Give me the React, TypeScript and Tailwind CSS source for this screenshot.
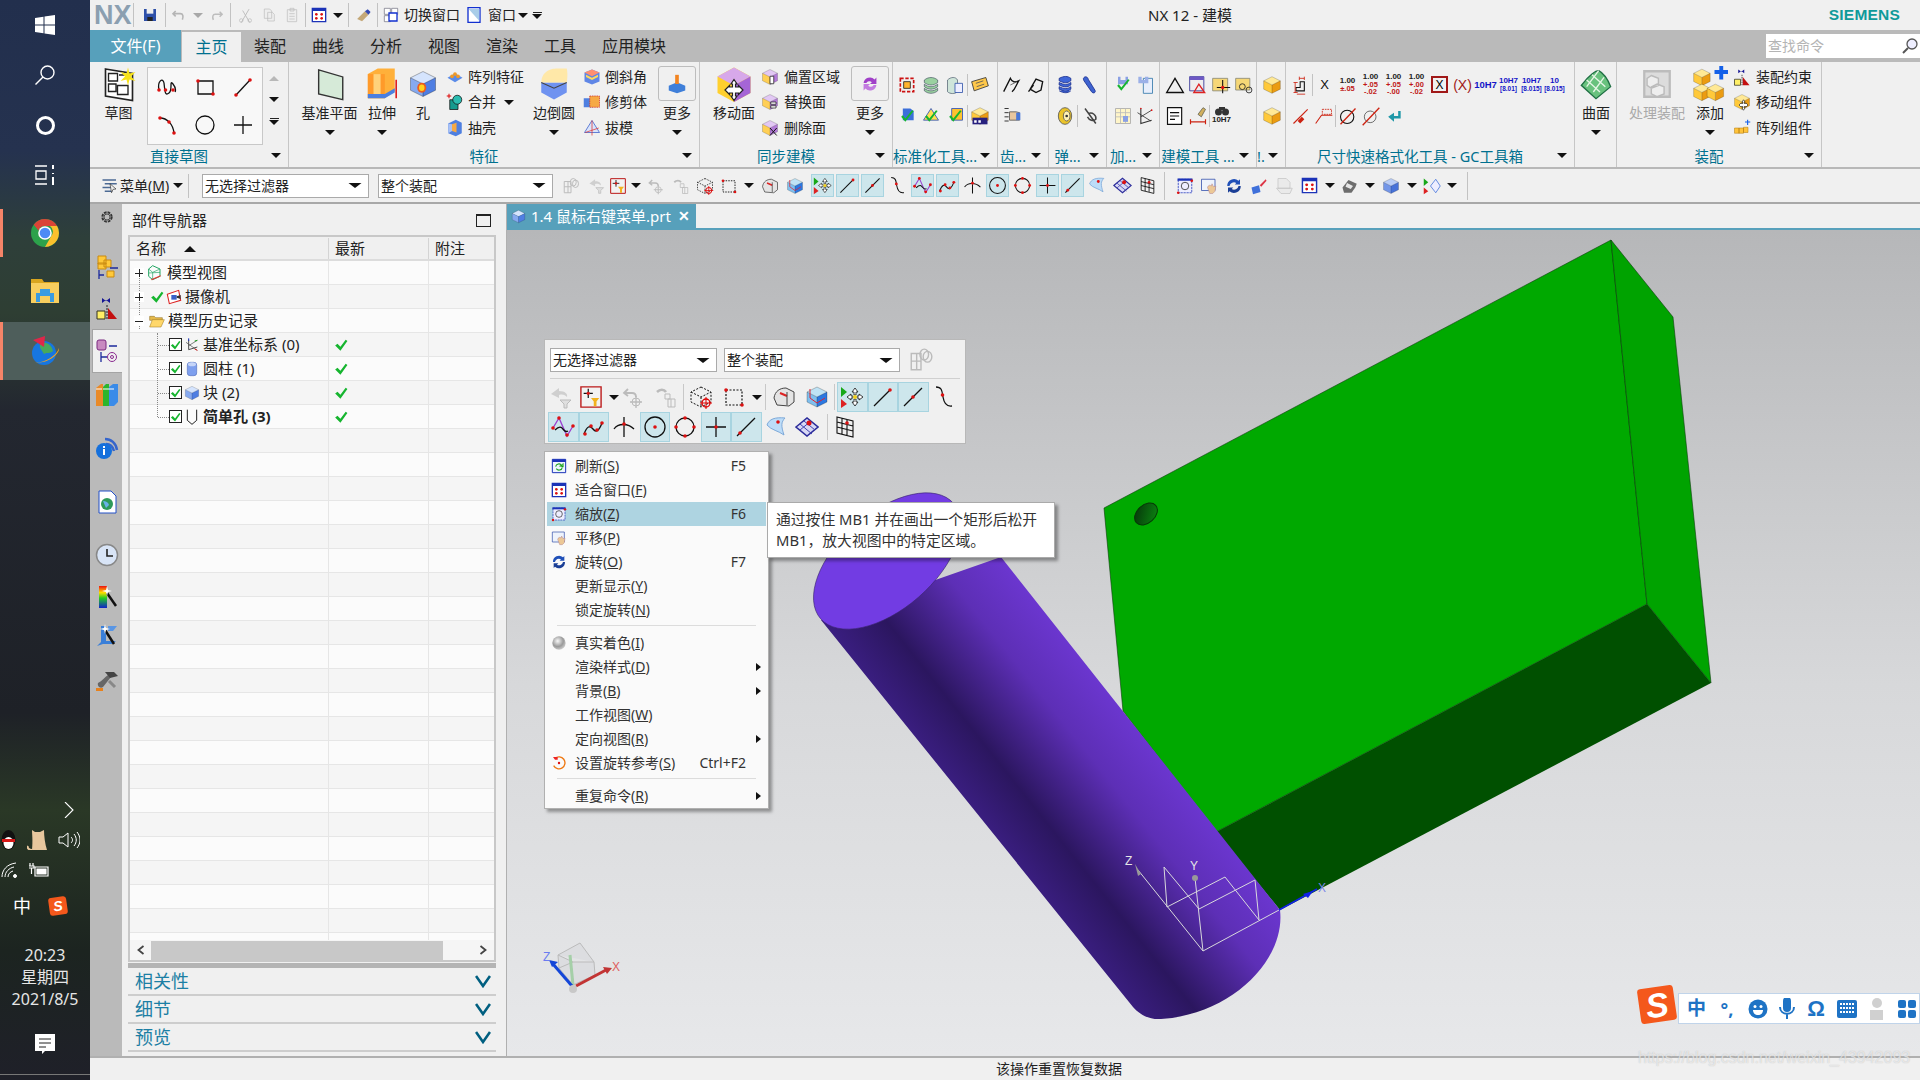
import type { ReactNode } from 'react';

const Svg = ({ s = 24, children }: { s?: number; children: ReactNode }) => (
  <svg width={s} height={s} viewBox="0 0 24 24" fill="none" className="shrink-0">
    {children}
  </svg>
);

const Dot = ({ x, y, r = 1.8 }: { x: number; y: number; r?: number }) => <circle cx={x} cy={y} r={r} fill="#dd1111" />;

const Cube = ({ t, l, r }: { t: string; l: string; r: string }) => (
  <>
    <path d="M12 2 22 7 12 12 2 7Z" fill={t} />
    <path d="M2 7 12 12V22L2 17Z" fill={l} />
    <path d="M22 7 12 12V22L22 17Z" fill={r} />
    <path d="M12 2 22 7V17L12 22 2 17V7ZM2 7l10 5 10-5M12 12v10" stroke="#00000055" strokeWidth=".7" />
  </>
);
const blue = { t: '#d5e4fd', l: '#86a9ef', r: '#4f7ee2' };
const yellow = { t: '#ffe995', l: '#ffc93a', r: '#eb9c12' };
const purple = { t: '#e2c8f4', l: '#ffcf55', r: '#b27ad8' };
const Ln = ({ d, c = '#111', w = 1.3 }: { d: string; c?: string; w?: number }) => <path d={d} stroke={c} strokeWidth={w} />;
const Check = ({ c = '#16b52f' }: { c?: string }) => <path d="M5 13l5 6L20 6l-2-1-8 10-3-4z" fill={c} />;

const icons: Record<string, ReactNode> = {
  save: (<><path d="M3 3h18v18H3z" fill="#2d4fa8" /><path d="M7 3h10v7H7z" fill="#eee" /><path d="M8 15h8v6H8z" fill="#222" /></>),
  undo: <Ln d="M7 6 3 10l4 4M3 10h11c4 0 5 4 3 9" c="#b5b5b5" w={2.4} />,
  redo: <Ln d="M17 6l4 4-4 4M21 10H10c-4 0-5 4-3 9" c="#bdbdbd" w={2.4} />,
  cut: (<><Ln d="M6 22 17 3M18 22 8 5" c="#bbb" /><circle cx="6" cy="19" r="2.5" stroke="#bbb" /><circle cx="18" cy="19" r="2.5" stroke="#bbb" /></>),
  copy: <path d="M5 3h8l3 3v11H5zM10 8h7l3 3v10H10z" fill="#eee" stroke="#bbb" />,
  paste: <path d="M5 4h14v18H5zM9 2h6v4H9zM8 10h8M8 14h8M8 18h8" fill="#eee" stroke="#bbb" />,
  fit: (<><path d="M2 2h20v20H2z" fill="#fff" stroke="#1c33b8" strokeWidth="2" /><path d="M2 2h20v4H2z" fill="#1c33b8" /><Dot x={8} y={11} r={2} /><Dot x={16} y={11} r={2} /><Dot x={8} y={17} r={2} /><Dot x={16} y={17} r={2} /></>),
  brush: (<><path d="M3 17 14 6l5 5-9 9z" fill="#c4a878" /><path d="M14 6l4-3 4 4-3 4z" fill="#3448b0" /></>),
  switchw: (<><path d="M2 2h9v9H2zM2 13h9v9H2zM13 2h9v9h-9z" fill="#fff" stroke="#667" /><path d="M9 9h12v12H9z" fill="#fff" stroke="#1230d0" strokeWidth="2" /></>),
  win: (<><path d="M3 1h18v22H3z" fill="#fff" stroke="#1230d0" strokeWidth="2" /><path d="M4 3h16v18z" fill="#a9cde8" /></>),
  sketch: (<><path d="M3 2 21 5v18L3 20z" fill="#fff" stroke="#222" strokeWidth="1.1" /><path d="M5 5h6v5H5zM5 12h5v5H5zM11 13h7v6h-7zM12 6h5" stroke="#222" strokeWidth=".9" /><path d="M18 1l1 4 4-1-3 3 3 3-4-1-1 4-1-4-4 1 3-3-3-3 4 1z" fill="#f7e21a" /></>),
  spline: (<><Ln d="M4 15C2 6 8 2 9 8c1 9 1 13 5 10 4-3 0-14 4-9s2 8 2 8" /><Dot x={4} y={15} /><Dot x={10.5} y={15} /><Dot x={18} y={15} /></>),
  rect: (<><path d="M5 6h15v13H5z" stroke="#111" strokeWidth="1.3" /><Dot x={5} y={6} /><Dot x={20} y={19} /></>),
  line: (<><Ln d="M5 20 19 5" /><Dot x={5} y={20} /><Dot x={19} y={5} /></>),
  arc: (<><Ln d="M5 5c7 0 13 6 14 15" /><Dot x={5} y={5} /><Dot x={14} y={9} /><Dot x={19} y={20} /></>),
  circle: <circle cx="12" cy="12" r="9" stroke="#111" strokeWidth="1.3" />,
  cross: <Ln d="M12 3v18M3 12h18" />,
  plane: <path d="M4 2 21 7v16L4 19z" fill="#d6ead8" stroke="#333" />,
  extrude: (<><path d="M2 5 9 1h12v16l-7 5H2z" fill="#ffb03a" /><path d="M2 5h12v17H2z" fill="#ff9a2a" /><path d="M6 5h5v17H6z" fill="#ffd27a" /><path d="M2 19h12l7-4v3l-7 4H2z" fill="#4a7fe0" /><Ln d="M22 22V9" c="#d00" w={1} /></>),
  hole: (<><Cube {...blue} /><ellipse cx="11" cy="15" rx="3.6" ry="4" fill="#ef5a1a" /><ellipse cx="11" cy="15" rx="2.2" ry="2.6" fill="#ffd21e" /></>),
  pattern: (<><path d="M2 13 12 7l10 6-10 6z" fill="#5a8be8" /><circle cx="8" cy="11" r="2.5" fill="#f29a24" /><circle cx="12" cy="8" r="2.5" fill="#f29a24" /><circle cx="16" cy="11" r="2.5" fill="#f29a24" /></>),
  unite: (<><path d="M5 9h11v13H5z" fill="#159a8e" stroke="#111" /><circle cx="15" cy="9" r="6" fill="#2bbcb0" stroke="#111" /><Ln d="M1 4h6M4 1v6" c="#d00" /></>),
  shell: (<><path d="M3 6 13 1l8 4v14l-8 4-10-4z" fill="#4e7fe0" /><path d="M8 7l6-2v13l-6-2z" fill="#f6a944" /><path d="M3 6l5 1v9l-5 3z" fill="#a9c1f5" /></>),
  blend: (<><path d="M3 11h18v7l-9 5-9-5z" fill="#6f92f0" /><path d="M3 11C3 3 10 1 14 1h7c1 4 0 10 0 10H3z" fill="#ffe8a8" /><path d="M3 11l9 4 9-4" stroke="#444" strokeWidth=".8" /></>),
  chamfer: (<><path d="M2 6 12 2l10 4v12l-10 4-10-4z" fill="#5f86e6" /><path d="M2 6l10-4 10 4-10 5z" fill="#ff8f70" /><path d="M4 9l8 4 8-4v3l-8 4-8-4z" fill="#ffd95a" /></>),
  trim: (<><path d="M1 7h12v12H1z" fill="#4e7fe0" /><path d="M9 4h13v15H9z" fill="#f6a944" stroke="#c33" strokeDasharray="2 1" /></>),
  draft: (<><path d="M12 2 22 18H2z" fill="#d9e4fb" stroke="#3559c8" /><path d="M12 2v20M3 18l18-6" stroke="#d33" /></>),
  boxarrow: (<><path d="M3 14l9-4 9 4v5l-9 3-9-3z" fill="#3f7fd9" /><path d="M10 2h4v10h-4z" fill="#f28420" /></>),
  moveface: (<><path d="M12 1 23 7v11l-11 6L1 18V7z" fill="#ffd02e" /><path d="M12 1 23 7 12 13 1 7z" fill="#d7a8ea" /><path d="M23 7v11l-11 6V13z" fill="#a565d6" /><path d="M12 9l2 3h-1v2h2v-1l3 3-3 3v-1h-2v2h1l-2 3-2-3h1v-2H9v1l-3-3 3-3v1h2v-2h-1z" fill="#fff" stroke="#222" strokeWidth=".8" /></>),
  offset: (<><Cube {...purple} /><path d="M12 11h5v10h-5z" fill="#fff" stroke="#222" /></>),
  replace: (<><Cube {...purple} /><path d="M13 12h7v3h-7zM13 17h7v3h-7z" fill="#fff" stroke="#222" /></>),
  deleteface: (<><Cube {...purple} /><Ln d="M12 12l9 10M21 12l-9 10" /></>),
  refresh: (<><path d="M5 11a7 7 0 0 1 12-4l2-2v7h-7l2-2a4 4 0 0 0-6 1z" fill="#a040c8" /><path d="M19 13a7 7 0 0 1-12 4l-2 2v-7h7l-2 2a4 4 0 0 0 6-1z" fill="#c27be0" /></>),
  frame: (<><path d="M4 4h16v16H4z" stroke="#c11" strokeWidth="2" strokeDasharray="4 2" /><path d="M8 8h8v8H8z" fill="#ffb52e" stroke="#222" /></>),
  stack: <path d="M4 6c5-4 11-4 16 0v3c-5 4-11 4-16 0zM4 11c5 4 11 4 16 0v3c-5 4-11 4-16 0zM4 16c5 4 11 4 16 0v3c-5 4-11 4-16 0z" fill="#9ad1a0" stroke="#345" strokeWidth=".7" />,
  stack2: (<><path d="M3 6c4-4 10-4 12 0v14c-3 3-9 3-12 0z" fill="#cfe5da" stroke="#456" strokeWidth=".8" /><path d="M12 10h9v11h-9z" fill="#eef" stroke="#35a" /></>),
  tag: (<><path d="M2 8 19 3l3 10-17 6z" fill="#ffc84a" stroke="#333" /><Ln d="M7 10l9-3M8 14l9-3" c="#555" w={1} /></>),
  checkcube: (<><path d="M7 3h9l4 3v11H7z" fill="#3b6fd9" /><Check /></>),
  checkhat: (<><path d="M12 3 21 17H3z" fill="#ffe050" stroke="#2b4fbc" /><Check /></>),
  checkyellow: (<><path d="M8 3h13v14H8z" fill="#ffc22e" stroke="#2b4fbc" /><Check /></>),
  yellowedit: (<><Cube {...yellow} /><path d="M3 14h18v8H3z" fill="#27207e" /><path d="M5 17h3v3H5zM10 17h3v3h-3z" fill="#fff" /></>),
  gearS: (<><Ln d="M2 20 10 4c2 5 6 5 10 3-3 5-4 10-8 13" w={1.6} /><path d="M10 12l8-4" stroke="#555" /></>),
  bevel: <path d="M5 17 12 5l8 3-2 10-6 3zM3 20l6-8" fill="#eee" stroke="#111" strokeWidth="1.6" />,
  hand: (<><Ln d="M3 3h5M3 8h5M3 13h5M3 18h5" w={1} /><path d="M9 7h8l4 1v9H9z" fill="#e9c79e" stroke="#555" /><path d="M17 8h5v9h-5z" fill="#4a78d8" /></>),
  coil: <path d="M5 4c6-3 10-3 14 0v3c-4 3-8 3-14 0zM5 9c6 3 10 3 14 0v3c-4 3-8 3-14 0zM5 14c6 3 10 3 14 0v3c-4 3-8 3-14 0zM5 19c6 3 10 3 14 0" fill="#3f66d8" stroke="#1b2f8f" />,
  spring: <path d="M6 3c2-2 5 0 5 2l8 13c2 3-2 5-4 2L6 7C5 5 5 4 6 3z" fill="#3e63d0" stroke="#1b2f8f" />,
  disk: (<><ellipse cx="12" cy="12" rx="8" ry="10" fill="#ebc42a" stroke="#555" /><ellipse cx="14" cy="12" rx="4" ry="6" fill="#fff2b4" stroke="#555" /><circle cx="14" cy="12" r="1.6" fill="#333" /></>),
  pipe: <Ln d="M6 3 19 21M10 9c5-2 10 2 9 7-3 3-8 1-10-3" c="#444" w={1.8} />,
  vCheck: (<><path d="M6 2h3v4h6V2h3v9H6z" fill="#8aa0e4" /><Check /></>),
  doclist: (<><path d="M10 4h11v18H10z" fill="#e7eefc" stroke="#37a" /><path d="M4 2h4v4h4V2h4v8H4z" fill="#9bb0e8" /></>),
  tableV: (<><path d="M3 3h18v18H3z" fill="#fff5c8" stroke="#aaa" /><path d="M3 8h18M3 13h18M9 3v18M15 3v18" stroke="#bbb" /><path d="M12 12h6v7h-6z" fill="#8aa0e4" /></>),
  axis: (<><path d="M7 3v18l13-4" stroke="#333" strokeWidth="1.3" /><path d="M3 8l16 10M7 13l13-8" stroke="#333" /><Dot x={7} y={3} r={1} /><Dot x={20} y={5} r={1} /></>),
  triangle: <path d="M12 4 22 21H2z" stroke="#111" strokeWidth="1.6" />,
  table: (<><path d="M2 2h17v17H2z" fill="#eee" stroke="#2c2c92" /><path d="M2 2h17v4H2z" fill="#6e58c4" /><path d="M13 11l7 10H7z" stroke="#d22" strokeWidth="1.6" /></>),
  folderCross: (<><path d="M2 4h18v15H2z" fill="#f6d776" stroke="#887" /><Ln d="M14 6v16M7 15h16" c="#111" /><Dot x={14} y={15} r={2} /></>),
  folderRing: (<><path d="M2 4h17v14H2z" fill="#f6d776" stroke="#887" /><circle cx="10" cy="14" r="3.5" stroke="#222" /><circle cx="18" cy="18" r="3.5" stroke="#222" /></>),
  note: <path d="M3 2h17v20H3zM6 8h11M6 12h11M6 16h6" fill="#fff" stroke="#111" strokeWidth="1.4" />,
  brushdim: (<><path d="M12 10 18 2l3 2-5 9z" fill="#d2b05e" stroke="#665" /><path d="M3 16v6M21 16v6M3 19h18" stroke="#c21" strokeWidth="1.4" /></>),
  yellowCubes: <Cube {...yellow} />,
  stepdim: (<><path d="M6 15h5V8h5v11H6z" stroke="#111" strokeWidth="1.3" /><path d="M10 2v4M16 2v4M10 4h6M3 9h5M3 21h5M5 9v12M7 23h10" stroke="#c21" /></>),
  slashdim: (<><Ln d="M3 21 20 4" c="#c21" w={1.4} /><path d="M8 18l5-5 3 3-5 5z" fill="#c21" /></>),
  leader: (<><Ln d="M2 21 9 11h13" c="#c21" /><path d="M10 4h11v6H10z" stroke="#c21" strokeDasharray="2 1" /></>),
  diaK: (<><circle cx="11" cy="13" r="8" stroke="#111" strokeWidth="1.3" /><Ln d="M3 22 21 3" c="#c21" w={1.6} /></>),
  diaR: (<><circle cx="11" cy="13" r="7" stroke="#555" /><Ln d="M2 23 22 2" c="#c21" w={1.6} /></>),
  tealArrow: <path d="M20 6v9h-8v4l-7-6 7-5v4h5V6z" fill="#1f98a8" />,
  surf: (<><path d="M1 13C7 5 12 2 14 2c4 2 7 7 9 12l-11 9z" fill="#69c27e" stroke="#1f6f44" /><path d="M5 9l10 9M9 5l10 9M14 2l-9 12M18 7l-8 11" stroke="#e6f5e6" /></>),
  assem: (<><path d="M3 3h18v18H3z" fill="#dcdcdc" stroke="#bcbcbc" strokeWidth="1.6" /><path d="M8 6l5 2v5l-5 2-3-2V8zM12 12l5 2v5l-5 2-4-2v-5z" fill="#eee" stroke="#bbb" /></>),
  addcube: (<><g transform="translate(0 1) scale(.55)"><Cube {...yellow} /></g><g transform="translate(0 11) scale(.55)"><Cube {...yellow} /></g><g transform="translate(9 11) scale(.55)"><Cube {...yellow} /></g><path d="M15 4h9M19.5 0v9" stroke="#1460e8" strokeWidth="2.6" /></>),
  constraint: (<><path d="M7 2v5l4-3 4 3V2l-4 3z" fill="#151593" /><path d="M2 15h8v8H2z" fill="#ffef66" stroke="#332" /><path d="M13 12l9 11h-9z" fill="#c30f0f" /><path d="M12 9v14" stroke="#222" strokeDasharray="2 1" /></>),
  movecomp: (<><Cube {...yellow} /><path d="M14 9l2 3h-1v2h2v-1l3 3-3 3v-1h-2v2h1l-2 3-2-3h1v-2h-2v1l-3-3 3-3v1h2v-2h-1z" fill="#fff" stroke="#111" strokeWidth=".8" /></>),
  arraycomp: (<><path d="M2 12h6v7H2zM8 12h6v7H8zM14 11h6v7h-6z" fill="#ffc33a" stroke="#b27a10" strokeWidth=".7" /><path d="M16 4h7M19.5 1v7" stroke="#1460e8" strokeWidth="1.5" /></>),
  menu: (<><path d="M2 3h18v2H2zM5 8h16v2H5zM2 13h12v2H2zM5 18h10v2H5z" fill="#4c6a94" /><path d="M12 9l8 7-4 .5L14 21z" fill="#eee" stroke="#222" strokeWidth=".8" /></>),
  link: (<><path d="M3 6h9v15H3zM8 6v15M3 13h9" stroke="#bbb" strokeWidth="1.3" /><ellipse cx="15" cy="7" rx="4" ry="5" stroke="#bbb" strokeWidth="1.3" /><ellipse cx="18" cy="9" rx="4" ry="5" stroke="#bbb" strokeWidth="1.3" /></>),
  grayfilter: (<><path d="M2 9 10 3v3c6 0 9 3 8 6-2-2-4-3-8-2v3z" fill="#cfcfcf" /><path d="M11 15h11l-4 4v4h-3v-4z" fill="#dfdfdf" stroke="#bbb" /></>),
  redfilter: (<><path d="M1 1h22v22H1z" fill="#f2f2f2" stroke="#bb1818" strokeWidth="1.5" /><Ln d="M9 3v10M4 8h10" /><Dot x={9} y={8} /><path d="M12 13h9l-3 4v5h-3v-5z" fill="#f2b21f" /></>),
  undoTarget: (<><Ln d="M7 4 3 8l4 3M3 8h8c3 0 4 2 4 4" c="#bbb" w={1.8} /><circle cx="15" cy="17" r="4" stroke="#bbb" /><Ln d="M15 11v12M9 17h12" c="#bbb" /></>),
  chainfilter: (<><path d="M3 7c3-3 7-3 9 0" stroke="#bbb" strokeWidth="2.5" /><path d="M11 9h5v5h-5zM14 14h7v8h-7zM17 14v8" stroke="#bbb" /></>),
  cubeTarget: (<><path d="M12 2 22 7v10l-10 5-10-5V7zM2 7l10 5 10-5M12 12v10" stroke="#111" strokeDasharray="2 1.5" /><circle cx="17" cy="18" r="4" stroke="#d00" strokeWidth="1.3" /><path d="M17 12v12M11 18h12" stroke="#d00" /></>),
  rectDash: (<><path d="M4 5h16v15H4z" stroke="#111" strokeDasharray="2 1.5" strokeWidth="1.2" /><Dot x={4} y={5} /><Dot x={20} y={20} /></>),
  viewcyl: (<><path d="M2 13C3 6 8 3 14 3l8 4v10l-5 4-12-1z" fill="#e4e4e4" stroke="#444" /><path d="M8 8l7 3" stroke="#d22" strokeWidth="2" /><path d="M15 7v13" stroke="#444" /></>),
  viewcube: (<><Cube t="#bfe3f5" l="#7fbfee" r="#2c78e0" /><path d="M5 4v9l7 5 8-5" stroke="#d23" /></>),
  snapall: (<><path d="M1 2l6 5-6 5z" fill="#18a818" /><path d="M1 14l6 5-6 4z" fill="#d22" /><path d="M15 3l3 4h-2v3h-2V7h-2zM15 21l3-4h-2v-3h-2v3h-2zM7 12l4-3v2h2v2h-2v2zM23 12l-4-3v2h-2v2h2v2z" fill="#fff" stroke="#111" strokeWidth=".8" /><circle cx="15" cy="12" r="2" fill="#f3d11f" /></>),
  lineEnd: (<><Ln d="M3 21 19 5" /><Dot x={19} y={5} /></>),
  lineMid: (<><Ln d="M3 21 21 3" /><Dot x={12} y={12} /></>),
  curvePt: (<><Ln d="M4 2c6 0 6 4 7 10s3 10 9 9" /><Dot x={10.5} y={10} /></>),
  polyPt: (<><Ln d="M2 13 8 3l8 18 6-10" c="#9a3fd0" /><Dot x={8} y={3} /><Dot x={2} y={13} /><Dot x={16} y={20} /><Dot x={22} y={11} /><Ln d="M4 15c3-3 5-4 7-2s3 5 6 3" /></>),
  splinePt: (<><Ln d="M2 19c3-8 6-9 9-5s6 2 9-6" /><Dot x={3} y={19} /><Dot x={9} y={11} /><Dot x={15} y={15} /><Dot x={20} y={8} /></>),
  arcPt: (<><Ln d="M2 14C6 8 16 8 22 14M12 2v20" /><Dot x={12} y={9} /></>),
  circleCtr: (<><circle cx="12" cy="12" r="10" stroke="#111" strokeWidth="1.3" /><Dot x={12} y={12} /></>),
  circle4: (<><circle cx="12" cy="12" r="9" stroke="#111" strokeWidth="1.3" /><Dot x={12} y={3} /><Dot x={12} y={21} /><Dot x={3} y={12} /><Dot x={21} y={12} /></>),
  crossPt: (<><Ln d="M12 2v20M2 12h20" /><Dot x={12} y={12} /></>),
  linePt: (<><Ln d="M3 21 21 3" /><Dot x={6} y={18} /></>),
  surfPt: (<><path d="M2 10C4 4 10 2 20 3c-4 4-4 8-1 17C14 16 6 15 2 10z" fill="#bcdcf8" stroke="#7ea9d8" /><Dot x={13} y={7} /></>),
  meshPt: (<><path d="M1 12 12 3l11 9-11 9z" fill="#d7d8f4" stroke="#2b2b9a" strokeWidth="1.5" /><path d="M5 9l12 10M9 6l11 9M5 15 16 6" stroke="#4343b0" /><Dot x={14} y={8} r={2.5} /></>),
  gridPt: (<><path d="M4 2 20 6v16L4 18zM4 7l16 4M4 12l16 4M9 3v16M14 4v16" stroke="#111" strokeWidth="1.1" /><Dot x={14} y={8} /></>),
  zoomW: (<><path d="M3 3h18v18H3z" fill="#eef" stroke="#1c33b8" strokeDasharray="3 1" /><path d="M2 2h20v3H2z" fill="#1c33b8" /><circle cx="12" cy="12" r="5" stroke="#222" /><Dot x={3} y={21} /><Dot x={21} y={5} /></>),
  pan: (<><path d="M2 3h18v15H2z" fill="#eef3fb" stroke="#2a48a8" /><path d="M10 14c1-3 3-4 5-2l1-3 2 4 3-1-1 7-3 3h-4z" fill="#ecc896" stroke="#a78" strokeWidth=".6" /></>),
  rotate: (<><path d="M3 12A9 9 0 0 1 18 5l2-2v7h-7l2-2A6 6 0 0 0 6 12z" fill="#2050b8" /><path d="M21 12a9 9 0 0 1-15 7l-2 2v-7h7l-2 2a6 6 0 0 0 9-4z" fill="#1b3f96" /></>),
  pen: (<><path d="M2 14l10-3 2 9-10 3z" fill="#3f70da" /><path d="M13 11l8-8 1 2-7 8z" fill="#dd3344" /></>),
  grayDoc: <path d="M4 2h11l5 5v8H4zM2 15l6 7h12l3-7z" fill="#eaeaea" stroke="#c4c4c4" />,
  scanner: (<><path d="M2 14l8-10 11 5-2 5-5 7H4z" fill="#6d6d6d" /><path d="M8 8l8 4-3 4-7-3z" fill="#e6e6e6" /></>),
  bluecube: <Cube t="#b9cdf7" l="#7396e8" r="#4772d8" />,
  snapfilter: (<><path d="M1 2l6 5-6 5z" fill="#18a818" /><path d="M1 14l6 5-6 4z" fill="#d22" /><path d="M17 3l6 9-6 9-7-9z" fill="#eef" stroke="#3a6cd8" /></>),
  refreshWin: (<><path d="M2 2h20v20H2z" fill="#eef5ff" stroke="#1c33b8" strokeWidth="1.5" /><path d="M2 2h20v4H2z" fill="#1c33b8" /><path d="M7 13a5 5 0 0 1 9-2l-2 1 4 1v-4l-1 1M17 14a5 5 0 0 1-9 2" stroke="#18a018" strokeWidth="1.6" /></>),
  sphere: (<><defs><radialGradient id="sph" cx=".4" cy=".35" r=".7"><stop offset="0" stopColor="#f8f8f8" /><stop offset=".6" stopColor="#9a9a9a" /><stop offset="1" stopColor="#d0d0d0" /></radialGradient></defs><circle cx="12" cy="12" r="10" fill="url(#sph)" /></>),
  rotref: (<><path d="M6 5a9 9 0 1 1-2 11" stroke="#ee7711" strokeWidth="2" /><path d="M3 3h7v4H6z" fill="#ee2222" /><Dot x={12} y={12} /></>),
  tree: (<><path d="M7 1 18 6v11l-11 5L1 17V6z" stroke="#23a563" strokeWidth="1.5" /><path d="M1 6l6 5 11-5M7 11v11M1 12l17-1" stroke="#23a563" /><path d="M5 22l14-6" stroke="#e33" strokeWidth="1.6" /></>),
  camera: (<><path d="M2 8 19 2l3 15-17 5z" fill="#fff" stroke="#dd2222" strokeWidth="1.6" /><path d="M8 9h8v7H8z" fill="#3a5fc8" /><path d="M16 11l6-2v6l-6-2z" fill="#333" /></>),
  folder: (<><path d="M1 5h7l2 2h10v4H1z" fill="#e5b94a" stroke="#8a6a20" strokeWidth=".8" /><path d="M1 21 5 10h18l-5 11z" fill="#ffd76a" stroke="#a07a20" strokeWidth=".8" /></>),
  datum: (<><path d="M7 4v15l13-4" stroke="#333" strokeWidth="1.3" /><path d="M3 8l17 12M7 13l13-8" stroke="#444" /><path d="M20 5l-4 1" stroke="#18a018" strokeWidth="1.5" /><path d="M20 20l-4-2" stroke="#d22" strokeWidth="1.5" /><path d="M7 2v4" stroke="#1c33b8" strokeWidth="1.5" /></>),
  cylinder: (<><rect x="5" y="2" width="14" height="20" rx="4" fill="#7e9fee" stroke="#5672c0" /><ellipse cx="12" cy="5" rx="6" ry="3" fill="#c6d5f8" /></>),
  block: <Cube {...blue} />,
  simplehole: <path d="M5 1v16l7 6 7-6V1" stroke="#111" strokeWidth="1.4" />,
};

const Ic = ({ n, s = 20 }: { n: string; s?: number }) => <Svg s={s}>{icons[n]}</Svg>;

const Caret = ({ c = 'border-t-[#111]' }: { c?: string }) => (
  <span className={`inline-block h-0 w-0 border-x-[5px] border-t-[5px] border-x-transparent ${c}`} />
);

const Sep = ({ h = 'h-[24px]', m = '' }: { h?: string; m?: string }) => <div className={`w-px bg-[#c2c2c2] ${h} ${m}`} />;

const Slot = ({ w, n, s = 20 }: { w: string; n: string; s?: number }) => (
  <div className={`flex h-[24px] shrink-0 items-center justify-center ${w}`}>
    <Ic n={n} s={s} />
  </div>
);

const SogouS = ({ s }: { s: string }) => (
  <span className={`flex rotate-[-8deg] items-center justify-center rounded-[3px] bg-[#f4581c] font-['Liberation_Sans',sans-serif] font-bold italic leading-none text-white ${s}`}>S</span>
);

const Taskbar = () => (
  <aside className="flex h-full w-[90px] shrink-0 flex-col items-center bg-[linear-gradient(180deg,#222f4d_0%,#25324f_14%,#2e3f3a_22%,#2e3e33_29%,#232730_38%,#1e2127_66%,#2a3826_75%,#1c2420_88%,#1f2029_100%)] text-[#e6e6e6]">
    <div className="flex h-[50px] w-full items-center justify-center">
      <svg width="20" height="20" viewBox="0 0 20 20"><path d="M0 3 8.5 1.800V9.500H0zM9.500 1.600 20 0V9.500H9.500zM0 10.500H8.500V18.200L0 17zM9.500 10.500H20V20L9.500 18.400z" fill="#fff" /></svg>
    </div>
    <div className="flex h-[50px] w-full items-center justify-center">
      <svg width="22" height="22" viewBox="0 0 22 22" fill="none" stroke="#fff" strokeWidth="1.4"><circle cx="13.5" cy="8.5" r="6.5" /><path d="M9 13 1.500 20.500" /></svg>
    </div>
    <div className="flex h-[50px] w-full items-center justify-center">
      <div className="h-[19px] w-[19px] rounded-full border-[3px] border-white" />
    </div>
    <div className="flex h-[50px] w-full items-center justify-center">
      <svg width="20" height="20" viewBox="0 0 20 20" fill="none" stroke="#fff" strokeWidth="1.3"><path d="M0 1h12M0 19h12M1 6h10v8H1z" /><path d="M18 0v4M18 8v1M18 12v8" strokeWidth="2" /></svg>
    </div>
    <div className="relative flex h-[66px] w-full items-center justify-center before:absolute before:left-0 before:top-[9px] before:h-[48px] before:w-[3px] before:bg-[#f58468]">
      <svg width="28" height="28" viewBox="0 0 28 28">
        <circle cx="14" cy="14" r="14" fill="#2ca14b" />
        <path d="M14 0a14 14 0 0 1 12.100 7H14a7 7 0 0 0-6.500 4.400L2.700 5.800A14 14 0 0 1 14 0z" fill="#db4437" />
        <path d="M26.100 7A14 14 0 0 1 14 28l6-10.500a7 7 0 0 0-1-10.500z" fill="#fbc02d" />
        <circle cx="14" cy="14" r="6.8" fill="#fff" /><circle cx="14" cy="14" r="5.3" fill="#4c8bf5" />
      </svg>
    </div>
    <div className="flex h-[56px] w-full items-center justify-center pb-[6px]">
      <svg width="28" height="24" viewBox="0 0 28 24"><path d="M0 0h11l2 3h15v21H0z" fill="#d9a51f" /><path d="M0 4h28v20H0z" fill="#f8ce5e" /><path d="M5 23v-9h4V10h10v4h4v9h-4v-6H9v6z" fill="#3a9be0" /></svg>
    </div>
    <div className="relative flex h-[58px] w-full items-center justify-center bg-[#4e5e5b] before:absolute before:left-0 before:top-0 before:h-full before:w-[3px] before:bg-[#f58468]">
      <svg width="30" height="30" viewBox="0 0 30 30">
        <circle cx="14" cy="17" r="12" fill="#1776e0" /><path d="M10 7c5-2 12 1 13 8-3 3-6 1-9 3-2-4-5-5-4-11z" fill="#48a85c" />
        <path d="M2 27c8 1 24-5 27-15 1 5-9 16-27 15z" fill="#f2a51e" /><path d="M3 4 15 0l-1 11z" fill="#e0264a" />
      </svg>
    </div>
    <div className="flex-1" />
    <div className="flex h-[30px] w-full items-center justify-end pr-[16px]">
      <svg width="10" height="16" viewBox="0 0 10 16" fill="none" stroke="#fff" strokeWidth="1.1"><path d="M1 0l8 8-8 8" /></svg>
    </div>
    <div className="flex h-[30px] w-full items-center gap-[10px]">
      <svg width="17" height="20" viewBox="0 0 17 20"><ellipse cx="8.5" cy="10" rx="7" ry="10" fill="#111" /><ellipse cx="8.5" cy="13" rx="5" ry="6" fill="#fff" /><path d="M2 9h13v3H2z" fill="#d81818" /></svg>
      <svg width="21" height="20" viewBox="0 0 21 20"><path d="M5 20C6 10 5 4 5 0l3 2h5l4-2c0 6 1 14 3 20z" fill="#e8c79d" /><path d="M5 20c-3 0-5-2-4-4" stroke="#e8c79d" strokeWidth="2" fill="none" /></svg>
      <svg width="22" height="18" viewBox="0 0 22 18" fill="none" stroke="#fff" strokeWidth="1"><path d="M1 6h4l5-4v14l-5-4H1zM13 6c2 2 2 4 0 6M16 3c3 4 3 8 0 12M19 1c4 5 4 11 0 16" /></svg>
    </div>
    <div className="flex h-[30px] w-full items-center gap-[12px] pl-[1px]">
      <svg width="16" height="16" viewBox="0 0 16 16" fill="none" stroke="#fff" strokeWidth="1"><path d="M1 15C1 8 6 2 15 1M4 15c0-5 4-9 9-10M7 15c0-3 2-5 5-6" /><circle cx="14" cy="14" r="1.5" fill="#fff" /></svg>
      <svg width="21" height="14" viewBox="0 0 21 14" fill="none" stroke="#fff" strokeWidth="1.2"><path d="M6 4h13v9H6z" /><path d="M8 6h9v5H8z" fill="#fff" /><path d="M1 0v3M4 0v3M0 3h5v2H0M2.500 5v6" /></svg>
    </div>
    <div className="flex h-[42px] w-full items-center gap-[18px] pl-[13px]">
      <span className="text-[18px] leading-none text-white">中</span>
      <SogouS s="h-[18px] w-[18px] text-[14px]" />
    </div>
    <div className="mt-[17px] flex flex-col items-center text-[16px] leading-[22px]">
      <span>20:23</span>
      <span>星期四</span>
      <span>2021/8/5</span>
    </div>
    <div className="mt-[22px] flex h-[24px] items-center justify-center">
      <svg width="22" height="22" viewBox="0 0 22 22"><path d="M1 1h20v17H11l-3 3v-3H1z" fill="#fff" /><path d="M5 6h12M5 10h12M5 14h7" stroke="#222" strokeWidth="1" /></svg>
    </div>
    <div className="mt-[18px] h-px w-full bg-[#777]" />
    <div className="h-[5px]" />
  </aside>
);

const TitleBar = () => (
  <header className="flex h-[30px] shrink-0 items-center bg-[#f0f0f0]">
    <div className="flex w-[1058px] items-center">
      <span className="ml-[4px] w-[37px] font-['Liberation_Sans',sans-serif] text-[27px] font-bold leading-none text-[#8b9fb0]">NX</span>
      <Sep m="ml-[2px]" />
      <Slot w="w-[31px]" n="save" s={16} />
      <Sep />
      <Slot w="w-[26px]" n="undo" s={16} />
      <div className="flex w-[12px] justify-center"><Caret c="border-t-[#a8a8a8]" /></div>
      <Slot w="w-[24px]" n="redo" s={15} />
      <Sep m="ml-[2px]" />
      <Slot w="w-[28px]" n="cut" s={17} />
      <Slot w="w-[20px]" n="copy" s={16} />
      <Slot w="w-[26px]" n="paste" s={16} />
      <Sep />
      <Slot w="w-[26px]" n="fit" s={16} />
      <div className="flex w-[12px] justify-center"><Caret /></div>
      <Sep m="ml-[4px]" />
      <Slot w="w-[28px]" n="brush" s={17} />
      <Sep />
      <Slot w="w-[26px]" n="switchw" s={16} />
      <span className="text-[14px] leading-none text-[#222]">切换窗口</span>
      <Slot w="w-[28px]" n="win" s={16} />
      <span className="text-[14px] leading-none text-[#222]">窗口</span>
      <div className="flex w-[14px] justify-center"><Caret /></div>
      <div className="flex w-[14px] flex-col items-center gap-[1px]"><span className="h-px w-[9px] bg-[#222]" /><Caret /></div>
    </div>
    <span className="text-[15px] leading-none text-[#222]">NX 12 - 建模</span>
    <span className="ml-auto mr-[20px] font-['Liberation_Sans',sans-serif] text-[15.5px] font-bold leading-none tracking-[0.2px] text-[#0f9a9a]">SIEMENS</span>
  </header>
);

const tabs = ['装配', '曲线', '分析', '视图', '渲染', '工具'];

const TabBar = () => (
  <nav className="flex h-[32px] shrink-0 items-end bg-[#bababa] text-[16px] leading-none text-[#222]">
    <div className="flex h-full w-[91px] items-center justify-center bg-[#57a0bb] text-white">文件(F)</div>
    <div className="ml-px flex h-[30px] w-[59px] items-center justify-center bg-[#f0f0f0] text-[#00708f]">主页</div>
    {tabs.map((t) => (
      <div key={t} className="flex h-full w-[58px] items-center justify-center">{t}</div>
    ))}
    <div className="flex h-full items-center pl-[13px]">应用模块</div>
    <div className="ml-auto flex h-[24px] w-[154px] items-center self-center bg-white pl-[2px] text-[14px] text-[#b4b4b4]">
      查找命令
      <svg className="ml-auto mr-[2px]" width="16" height="16" viewBox="0 0 16 16" fill="none" stroke="#555" strokeWidth="1.3"><circle cx="10" cy="6" r="5" fill="#eef" /><path d="M6 10 1 15" strokeWidth="2" /></svg>
    </div>
  </nav>
);

const Group = ({ w, label, children, arrow = true }: { w: string; label: string; children: ReactNode; arrow?: boolean }) => (
  <section className={`flex h-full shrink-0 flex-col border-r border-[#c6c6c6] ${w}`}>
    <div className="flex h-[83px] items-start">{children}</div>
    <div className="relative flex h-[22px] items-center justify-center overflow-hidden whitespace-nowrap pr-[20px] text-[14.5px] leading-none text-[#00708f]">
      {label}
      {arrow && <span className="absolute right-[7px] top-[8px] flex"><Caret /></span>}
    </div>
  </section>
);

const Big = ({ w, n, s = 34, label, gray = false, caret = true, ml = '' }: { w: string; n: string; s?: number; label: string; gray?: boolean; caret?: boolean; ml?: string }) => (
  <div className={`flex shrink-0 flex-col items-center pt-[5px] ${w} ${ml}`}>
    <div className="flex h-[34px] items-center justify-center"><Ic n={n} s={s} /></div>
    <span className={`mt-[2px] h-[20px] whitespace-nowrap text-[14px] leading-[20px] ${gray ? 'text-[#aaa]' : 'text-[#222]'}`}>{label}</span>
    {caret && <span className="mt-[7px] flex"><Caret /></span>}
  </div>
);

const More = ({ n, w, ml }: { n: string; w: string; ml: string }) => (
  <div className={`flex shrink-0 flex-col items-center pt-[4px] ${w} ${ml}`}>
    <div className="flex h-[35px] w-full items-center justify-center rounded-[3px] border border-[#bdbdbd]"><Ic n={n} s={22} /></div>
    <span className="mt-[2px] h-[20px] text-[14px] leading-[20px] text-[#222]">更多</span>
    <span className="mt-[7px] flex"><Caret /></span>
  </div>
);

const Small = ({ items, slot, w, ml = '' }: { items: [string, string, boolean?][]; slot: string; w: string; ml?: string }) => (
  <div className={`flex shrink-0 flex-col pt-[2px] ${w} ${ml}`}>
    {items.map(([n, t, caret]) => (
      <div key={t} className="flex h-[25.5px] items-center text-[14px] leading-none text-[#222]">
        <div className={`flex shrink-0 justify-center pr-[3px] ${slot}`}><Ic n={n} s={18} /></div>
        <span className="whitespace-nowrap">{t}</span>
        {caret && <span className="ml-[8px] flex"><Caret /></span>}
      </div>
    ))}
  </div>
);

const IconRows = ({ rows, slot, pl, s = 20 }: { rows: string[][]; slot: string; pl: string; s?: number }) => (
  <div className={`flex flex-col pt-[7px] ${pl}`}>
    {rows.map((r, i) => (
      <div key={i} className="flex h-[31px] items-center">
        {r.map((n, j) =>
          n === '|' ? <Sep key={j} h="h-[22px]" /> : (
            <div key={j} className={`flex shrink-0 items-center justify-center ${slot}`}>
              {n in icons ? <Ic n={n} s={s} /> : <DimGlyph t={n} />}
            </div>
          ),
        )}
      </div>
    ))}
  </div>
);

// dimension-format buttons: the picture shows little numbers, so they stay text
const DimGlyph = ({ t }: { t: string }) => {
  const [a, b, c] = t.split('/');
  const tol = a.includes('H') || a === '10';
  if (t === 'X') return <span className="font-['Liberation_Sans',sans-serif] text-[13px] leading-none text-[#111]">X</span>;
  if (t === 'bX') return <span className="flex h-[17px] w-[17px] items-center justify-center border-2 border-[#a01818] font-['Liberation_Sans',sans-serif] text-[12px] leading-none">X</span>;
  if (t === 'pX') return <span className="font-['Liberation_Sans',sans-serif] text-[14px] leading-none text-[#a01818]">(X)</span>;
  if (t === 'bin') {
    return (
      <span className="flex flex-col items-center font-['Liberation_Sans',sans-serif] text-[8px] font-bold leading-[8px] text-[#222]">
        <svg width="14" height="9" viewBox="0 0 14 9" fill="#333"><circle cx="3.5" cy="5" r="3.5" /><circle cx="10.5" cy="5" r="3.5" /><path d="M4 0h6v3H4z" /></svg>
        10H7
      </span>
    );
  }
  return (
    <span className={`flex flex-col items-center whitespace-nowrap font-['Liberation_Sans',sans-serif] font-bold ${tol ? 'text-[#1414c8]' : 'text-[#222]'} ${b ? 'text-[8px] leading-[7.5px]' : 'text-[9.5px] leading-none'}`}>
      <span>{a}</span>
      {b && <span className={tol ? 'text-[6.5px]' : 'text-[7.5px] text-[#c01818]'}>{b}</span>}
      {c && <span className="text-[7.5px] text-[#c01818]">{c}</span>}
    </span>
  );
};

const Ribbon = () => (
  <div className="flex h-[107px] shrink-0 border-b-2 border-[#b8b8b8] bg-[#f0f0f0]">
    <Group w="w-[199px]" label="直接草图">
      <Big w="w-[57px]" n="sketch" s={36} label="草图" caret={false} />
      <div className="mt-[5px] grid h-[78px] w-[116px] grid-cols-3 place-items-center border border-[#c8c8c8] bg-[#f8f8f8]">
        {['spline', 'rect', 'line', 'arc', 'circle', 'cross'].map((n) => <Ic key={n} n={n} s={24} />)}
      </div>
      <div className="flex h-[83px] w-[22px] flex-col items-center gap-[16px] pt-[14px]">
        <Caret c="border-t-[#b8b8b8] rotate-180" />
        <Caret />
        <span className="flex flex-col items-center gap-[1px]"><span className="h-px w-[9px] bg-[#222]" /><Caret /></span>
      </div>
    </Group>
    <Group w="w-[411px]" label="特征">
      <Big w="w-[81px]" n="plane" label="基准平面" />
      <Big w="w-[24px]" n="extrude" label="拉伸" />
      <Big w="w-[42px]" ml="ml-[8px]" n="hole" s={30} label="孔" caret={false} />
      <Small w="w-[80px]" slot="w-[24px]" items={[['pattern', '阵列特征'], ['unite', '合并', true], ['shell', '抽壳']]} />
      <Big w="w-[42px]" ml="ml-[9px]" n="blend" label="边倒圆" />
      <Small w="w-[66px]" ml="ml-[6px]" slot="w-[24px]" items={[['chamfer', '倒斜角'], ['trim', '修剪体'], ['draft', '拔模']]} />
      <More n="boxarrow" w="w-[38px]" ml="ml-[11px]" />
    </Group>
    <Group w="w-[193px]" label="同步建模">
      <Big w="w-[50px]" ml="ml-[9px]" n="moveface" s={36} label="移动面" caret={false} />
      <Small w="w-[81px]" slot="w-[25px]" items={[['offset', '偏置区域'], ['replace', '替换面'], ['deleteface', '删除面']]} />
      <More n="refresh" w="w-[38px]" ml="ml-[11px]" />
    </Group>
    <Group w="w-[105px]" label="标准化工具...">
      <IconRows pl="pl-[2px]" slot="w-[24px]" rows={[['frame', 'stack', 'stack2', '|', 'tag'], ['checkcube', 'checkhat', 'checkyellow', '|', 'yellowedit']]} />
    </Group>
    <Group w="w-[51px]" label="齿...">
      <IconRows pl="pl-[2px]" slot="w-[24px]" rows={[['gearS', 'bevel'], ['hand']]} />
    </Group>
    <Group w="w-[58px]" label="弹...">
      <IconRows pl="pl-[4px]" slot="w-[24px]" rows={[['coil', 'spring'], ['disk', '|', 'pipe']]} />
    </Group>
    <Group w="w-[53px]" label="加...">
      <IconRows pl="pl-[5px]" slot="w-[22px]" rows={[['vCheck', 'doclist'], ['tableV', 'axis']]} />
    </Group>
    <Group w="w-[97px]" label="建模工具 ...">
      <IconRows pl="pl-[3px]" slot="w-[23px]" rows={[['triangle', 'table', 'folderCross', 'folderRing'], ['note', 'brushdim', '|', 'bin']]} />
    </Group>
    <Group w="w-[29px]" label="!.">
      <IconRows pl="pl-[4px]" slot="w-[22px]" rows={[['yellowCubes'], ['yellowCubes']]} />
    </Group>
    <Group w="w-[289px]" label="尺寸快速格式化工具 - GC工具箱">
      <IconRows pl="pl-[3px]" slot="w-[23px]" rows={[['stepdim', '|', 'X', '1.00/±.05', '1.00/+.05/-.02', '1.00/+.05/-.00', '1.00/+.00/-.02', 'bX', 'pX', '10H7', '10H7/[8.01]', '10H7/[8.015]', '10/[8.015]'], ['slashdim', 'leader', '|', 'diaK', 'diaR', 'tealArrow']]} />
    </Group>
    <Group w="w-[42px]" label="" arrow={false}>
      <Big w="w-[42px]" n="surf" s={32} label="曲面" />
    </Group>
    <Group w="w-[205px]" label="装配">
      <Big w="w-[56px]" ml="ml-[12px]" n="assem" label="处理装配" gray caret={false} />
      <Big w="w-[40px]" ml="ml-[5px]" n="addcube" s={36} label="添加" />
      <Small w="w-[82px]" ml="ml-[1px]" slot="w-[25px]" items={[['constraint', '装配约束'], ['movecomp', '移动组件'], ['arraycomp', '阵列组件']]} />
    </Group>
  </div>
);

const Select = ({ w, text }: { w: string; text: string }) => (
  <div className={`flex h-[24px] shrink-0 items-center justify-between border border-[#aaa] bg-white pl-[2px] pr-[8px] text-[14px] leading-none text-[#222] ${w}`}>
    <span>{text}</span>
    <span className="flex scale-x-[1.3]"><Caret /></span>
  </div>
);

const Snap = ({ n, on = false }: { n: string; on?: boolean }) => (
  <div className="flex h-[24px] w-[25px] shrink-0 items-center justify-center">
    <div className={`flex h-[23px] w-[23px] items-center justify-center ${on ? 'border border-[#a8d4e0] bg-[#cde6ec]' : ''}`}>
      <Ic n={n} s={19} />
    </div>
  </div>
);

const CaretSlot = () => <div className="flex w-[16px] shrink-0 justify-center"><Caret /></div>;

const ToolStrip = () => (
  <div className="flex h-[35px] shrink-0 items-center border-b-2 border-[#a8a8a8] bg-[#f0f0f0]">
    <div className="ml-[10px] flex w-[20px] justify-center"><Ic n="menu" s={18} /></div>
    <span className="text-[14px] leading-none text-[#222]">菜单(<u>M</u>)</span>
    <div className="ml-[3px] flex w-[12px] justify-center"><Caret /></div>
    <Sep m="ml-[4px]" />
    <Select w="w-[167px] ml-[13px]" text="无选择过滤器" />
    <Select w="w-[175px] ml-[9px]" text="整个装配" />
    <Slot w="w-[26px] ml-[5px]" n="link" s={18} />
    <Slot w="w-[24px]" n="grayfilter" s={17} />
    <Slot w="w-[20px]" n="redfilter" s={16} />
    <CaretSlot />
    <Slot w="w-[24px]" n="undoTarget" s={18} />
    <Slot w="w-[25px]" n="chainfilter" s={18} />
    <Slot w="w-[24px]" n="cubeTarget" s={18} />
    <Slot w="w-[24px]" n="rectDash" s={18} />
    <CaretSlot />
    <Slot w="w-[26px]" n="viewcyl" s={18} />
    <Slot w="w-[24px]" n="viewcube" s={18} />
    <div className="w-[3px]" />
    <Snap n="snapall" on /><Snap n="lineEnd" on /><Snap n="lineMid" on />
    <Snap n="curvePt" /><Snap n="polyPt" on /><Snap n="splinePt" on />
    <Snap n="arcPt" /><Snap n="circleCtr" on /><Snap n="circle4" />
    <Snap n="crossPt" on /><Snap n="linePt" on /><Snap n="surfPt" />
    <Snap n="meshPt" /><Snap n="gridPt" />
    <Sep m="ml-[4px]" h="h-[28px]" />
    <Slot w="w-[24px] ml-[8px]" n="zoomW" s={18} />
    <Slot w="w-[24px]" n="pan" s={18} />
    <Slot w="w-[25px]" n="rotate" s={18} />
    <Slot w="w-[26px]" n="pen" s={18} />
    <Slot w="w-[24px]" n="grayDoc" s={18} />
    <Slot w="w-[26px]" n="fit" s={17} />
    <CaretSlot />
    <Slot w="w-[24px]" n="scanner" s={18} />
    <CaretSlot />
    <Slot w="w-[26px]" n="bluecube" s={18} />
    <CaretSlot />
    <Slot w="w-[24px]" n="snapfilter" s={18} />
    <CaretSlot />
    <Sep m="ml-[7px]" h="h-[28px]" />
  </div>
);

const strip: [string, string][] = [
  ['gear', 'h-[26px]'],
  ['', 'h-[17px]'],
  ['assyTree', 'h-[40px]'],
  ['constraint', 'h-[42px]'],
  ['partTree', 'h-[44px]'],
  ['books', 'h-[44px]'],
  ['info', 'h-[62px]'],
  ['webdoc', 'h-[46px]'],
  ['clock', 'h-[60px]'],
  ['rainbow', 'h-[24px]'],
  ['wand', 'h-[52px]'],
  ['wrench', 'h-[38px]'],
];

const stripIcons: Record<string, ReactNode> = {
  gear: (<><circle cx="12" cy="12" r="7" stroke="#333" strokeWidth="3" strokeDasharray="4 1.5" /><circle cx="12" cy="12" r="4.5" stroke="#333" strokeWidth="1.2" /></>),
  assyTree: (<><path d="M3 1h8v8H3zM9 5h7v7H9zM3 8h8v6H3z" fill="#ffc93a" stroke="#c98a10" /><path d="M4 15v9M4 20h5M15 13h8" stroke="#1c2a9c" strokeWidth="1.3" /><path d="M12 16h7v6h-7z" fill="#ffc93a" stroke="#c98a10" /></>),
  partTree: (<><rect x="1" y="1" width="9" height="10" rx="2" fill="#c88bc0" stroke="#7a2a80" /><path d="M13 7h8M5 13v10M5 18h6" stroke="#1c2a9c" strokeWidth="1.3" /><circle cx="16" cy="18" r="4.5" stroke="#8a2a90" /><circle cx="16" cy="18" r="1.5" stroke="#8a2a90" /></>),
  books: (<><path d="M1 5 6 1h2v22H1z" fill="#e98a28" /><path d="M8 4l3-3h3v22H8z" fill="#2cb52c" /><path d="M14 4l4-3h5v18l-4 4h-5z" fill="#3a8be8" /><path d="M1 6h6M8 6h6M14 6h5" stroke="#fff" /></>),
  info: (<><path d="M10 3c6 0 11 4 12 11M11 8c4 0 7 3 8 7" stroke="#3565cc" strokeWidth="2.5" /><circle cx="9" cy="15" r="8" fill="#1570dc" /><path d="M8 10h2v2H8zM8 13h2v6H8z" fill="#fff" /></>),
  webdoc: (<><path d="M4 1h12l5 5v17H4z" fill="#fff" stroke="#2250c8" /><circle cx="12" cy="14" r="6" fill="#2e9a5a" /><path d="M8 11c3 0 5 1 6 4l-3 3z" fill="#6ab0e8" /></>),
  clock: (<><circle cx="12" cy="12" r="10.5" fill="#d8e4f6" stroke="#888" strokeWidth="1.5" /><path d="M12 6v7h6" stroke="#222" strokeWidth="1.6" /></>),
  rainbow: (<><defs><linearGradient id="rbw" x1="0" y1="0" x2="0" y2="1"><stop offset="0" stopColor="#e11" /><stop offset=".3" stopColor="#fd0" /><stop offset=".55" stopColor="#2c2" /><stop offset="1" stopColor="#12c" /></linearGradient></defs><path d="M4 1h8v22H4z" fill="url(#rbw)" /><path d="M12 8l9 13" stroke="#111" strokeWidth="2.5" /><path d="M12 1l1 4 4 1-4 1-1 4-1-4-4-1 4-1z" fill="#fff" /></>),
  wand: (<><path d="M6 3h5v15h10l-4 3H8l-6 2 4-4z" fill="#3a7fd8" /><path d="M13 3h9l-4 5h-5z" fill="#5a96e4" /><path d="M10 7l9 14" stroke="#111" strokeWidth="2.5" /><path d="M10 1l1 4 4 1-4 1-1 4-1-4-4-1 4-1z" fill="#fff" /></>),
  wrench: (<><path d="M3 15c4-2 7-6 10-8l3 2-8 10c-3 2-6-1-5-4z" fill="#666" /><path d="M10 4h9l4 4-8 2z" fill="#444" /><path d="M1 20h7v3H1z" fill="#e8811a" /><path d="M14 13l6 6" stroke="#888" strokeWidth="3" /></>),
};

const StripTabs = () => (
  <div className="flex h-full w-[32px] shrink-0 flex-col bg-[#bababa]">
    {strip.map(([n, h]) => (
      <div key={n + h} className={`flex w-[30px] items-center justify-center self-end ${h} ${n === 'partTree' ? 'border-y border-l border-[#a4a4a4] bg-[#f0f0f0]' : ''}`}>
        {n && <Svg s={n === 'gear' ? 16 : 24}>{n === 'constraint' ? icons.constraint : stripIcons[n]}</Svg>}
      </div>
    ))}
  </div>
);

const Ok = ({ s = 14 }: { s?: number }) => (
  <svg width={s} height={s} viewBox="0 0 24 24"><path d="M2 13l4-3 5 5L20 3l3 2-12 17z" fill="#16b52f" /></svg>
);

const CheckBox = () => (
  <span className="flex h-[13px] w-[13px] shrink-0 items-center justify-center border border-[#222] bg-white"><Ok s={12} /></span>
);

const Expander = ({ minus = false }: { minus?: boolean }) => (
  <span className="absolute left-[4px] top-[7px] z-10 flex h-[10px] w-[10px] items-center justify-center bg-white">
    <span className="absolute h-px w-[8px] bg-[#222]" />
    {!minus && <span className="absolute h-[8px] w-px bg-[#222]" />}
  </span>
);

type TreeRow = { text: string; ok?: boolean; bold?: boolean; icon: string; exp?: 'plus' | 'minus'; check?: boolean; pl: string };

const tree: TreeRow[] = [
  { text: '模型视图', icon: 'tree', exp: 'plus', pl: 'pl-[18px]' },
  { text: '摄像机', icon: 'camera', exp: 'plus', check: true, pl: 'pl-[20px]' },
  { text: '模型历史记录', icon: 'folder', exp: 'minus', pl: 'pl-[19px]' },
  { text: '基准坐标系 (0)', icon: 'datum', ok: true, pl: 'pl-[39px]' },
  { text: '圆柱 (1)', icon: 'cylinder', ok: true, pl: 'pl-[39px]' },
  { text: '块 (2)', icon: 'block', ok: true, pl: 'pl-[39px]' },
  { text: '简单孔 (3)', icon: 'simplehole', ok: true, bold: true, pl: 'pl-[39px]' },
];

const Rows = () => (
  <div className="relative h-[679px] overflow-hidden">
    {Array.from({ length: 29 }, (_, i) => {
      const r = tree[i];
      return (
        <div key={i} className={`grid h-[24px] grid-cols-[199px_100px_1fr] border-b border-[#e6e6e6] text-[15px] leading-none text-[#222] ${i % 2 ? 'bg-[#f5f5f5]' : 'bg-[#fbfbfb]'}`}>
          <div className={`relative flex items-center gap-[2px] border-r border-[#e6e6e6] ${r ? r.pl : ''}`}>
            {r?.exp && <Expander minus={r.exp === 'minus'} />}
            {r?.check && <span className="flex w-[14px] justify-center"><Ok s={14} /></span>}
            {r && i >= 3 && <CheckBox />}
            {r && <Ic n={r.icon} s={16} />}
            {r && <span className={`ml-px whitespace-nowrap ${r.bold ? 'font-bold' : ''}`}>{r.text}</span>}
          </div>
          <div className="flex items-center border-r border-[#e6e6e6] pl-[5px]">{r?.ok && <Ok />}</div>
          <div />
        </div>
      );
    })}
    {/* tree connector lines */}
    <span className="absolute left-[9px] top-[16px] h-[52px] border-l border-dotted border-[#888]" />
    <span className="absolute left-[27px] top-[72px] h-[84px] border-l border-dotted border-[#888]" />
    <span className="absolute left-[28px] top-[84px] w-[11px] border-t border-dotted border-[#888]" />
    <span className="absolute left-[28px] top-[108px] w-[11px] border-t border-dotted border-[#888]" />
    <span className="absolute left-[28px] top-[132px] w-[11px] border-t border-dotted border-[#888]" />
    <span className="absolute left-[28px] top-[156px] w-[11px] border-t border-dotted border-[#888]" />
  </div>
);

const Accordion = ({ text }: { text: string }) => (
  <div className="flex h-[28px] items-center justify-between border-b-2 border-[#cdcdcd] pl-[7px] pr-[5px] text-[18px] leading-none text-[#1c7fa4]">
    {text}
    <svg width="16" height="14" viewBox="0 0 16 14" fill="none" stroke="#005f80" strokeWidth="2.6"><path d="M1 2l7 10 7-10" /></svg>
  </div>
);

const Navigator = () => (
  <div className="flex h-full w-[384px] shrink-0 flex-col bg-[#f0f0f0] pl-[6px] pr-[10px]">
    <div className="flex h-[31px] shrink-0 items-center justify-between pl-[4px] pr-[5px] pt-[1px] text-[15px] leading-none text-[#222]">
      部件导航器
      <span className="h-[13px] w-[15px] border border-t-2 border-[#222]" />
    </div>
    <div className="shrink-0 border-2 border-[#c8c8c8] bg-[#fbfbfb]">
      <div className="grid h-[24px] grid-cols-[199px_100px_1fr] border-b-2 border-[#dcdcdc] bg-[#f0f0f0] pt-[1px] text-[15px] leading-none text-[#222]">
        <div className="flex items-center gap-[18px] border-r border-[#d4d4d4] pl-[6px]">
          名称
          <span className="h-0 w-0 border-x-[6px] border-b-[6px] border-x-transparent border-b-[#111]" />
        </div>
        <div className="flex items-center border-r border-[#d4d4d4] pl-[6px]">最新</div>
        <div className="flex items-center pl-[6px]">附注</div>
      </div>
      <Rows />
      <div className="flex h-[20px] items-center bg-[#f5f5f5]">
        <span className="flex w-[21px] justify-center"><svg width="8" height="10" viewBox="0 0 8 10" fill="none" stroke="#444" strokeWidth="1.8"><path d="M6.5 1 1.500 5l5 4" /></svg></span>
        <div className="h-[19px] w-[292px] bg-[#c8c8c8]" />
        <span className="ml-auto mr-[7px] flex"><svg width="8" height="10" viewBox="0 0 8 10" fill="none" stroke="#444" strokeWidth="1.8"><path d="M1.5 1l5 4-5 4" /></svg></span>
      </div>
    </div>
    <div className="mt-px h-[5px] shrink-0 bg-[#b4b4b4]" />
    <Accordion text="相关性" />
    <Accordion text="细节" />
    <Accordion text="预览" />
  </div>
);

const Model = () => (
  <svg className="absolute inset-0" width="1414" height="826" viewBox="506 230 1414 826" fill="none">
    <defs>
      <linearGradient id="cyl" gradientUnits="userSpaceOnUse" x1="1000" y1="557" x2="859" y2="669">
        <stop offset="0" stopColor="#6b36cf" />
        <stop offset=".3" stopColor="#5d2fb6" />
        <stop offset=".72" stopColor="#2b165f" />
        <stop offset="1" stopColor="#3a1e80" />
      </linearGradient>
      <linearGradient id="hole" x1="0" y1="0" x2="1" y2="1">
        <stop offset="0" stopColor="#06300a" />
        <stop offset="1" stopColor="#0d8a12" />
      </linearGradient>
    </defs>
    <path d="M1103 508 1610 240 1646 604 1215 832 1122 711Z" fill="#00a900" stroke="#0b3d0b" strokeWidth=".6" />
    <path d="M1610 240 1672 317 1710 683 1646 604Z" fill="#00a300" stroke="#0b3d0b" strokeWidth=".6" />
    <path d="M1215 832 1646 604 1710 683 1279 910Z" fill="#005000" />
    <ellipse cx="1145" cy="514" rx="13" ry="9" transform="rotate(-42 1145 514)" fill="url(#hole)" stroke="#063a06" />
    <path d="M1000 557 1279 910C1285 960 1230 1015 1160 1019 1148 1020 1138 1014 1132 1007L820 620Z" fill="url(#cyl)" />
    <ellipse cx="886" cy="561" rx="88" ry="48" transform="rotate(-41 886 561)" fill="#723ce3" stroke="#3b2570" strokeWidth=".6" />
    <g stroke="#d8d8dc" strokeWidth="1">
      <path d="M1202 951 1278 910M1202 951 1137 870M1202 951 1194 878M1166 907 1224 877 1258 920 1254 880 1198 909 1163 867 1166 907" />
    </g>
    <path d="M1278 910 1316 889" stroke="#1020e8" strokeWidth="1.5" />
    <path d="M1302 894l10-3-5 7z" fill="#1020e8" />
    <path d="M1134 864l6 10-3 2z" fill="#999" />
    <circle cx="1194" cy="878" r="3" fill="#999" />
    <g fontFamily="'Liberation Sans',sans-serif" fontSize="12">
      <text x="1124" y="865" fill="#e6e6e6">Z</text>
      <text x="1189" y="870" fill="#e6e6e6">Y</text>
      <text x="1317" y="892" fill="#7d88e8">X</text>
    </g>
    {/* corner triad */}
    <path d="M557 955 579 943 593 962 594 975 572 985 558 968ZM557 955 572 962 593 962M572 962 558 968" fill="#dcdde0" stroke="#bbb" />
    <path d="M569 955 572 985" stroke="#a5cfa8" strokeWidth="3" />
    <path d="M571 986 552 964" stroke="#1446d8" strokeWidth="3" />
    <path d="M548 960l9 2-6 5z" fill="#1446d8" />
    <path d="M575 986 605 970" stroke="#c23434" strokeWidth="3" />
    <path d="M611 968l-9-1 4 7z" fill="#c23434" />
    <circle cx="572" cy="989" r="4" fill="#c8c8c8" />
    <g fontFamily="'Liberation Sans',sans-serif" fontSize="12">
      <text x="542" y="961" fill="#6a7cf0">Z</text>
      <text x="611" y="971" fill="#df6060">X</text>
    </g>
  </svg>
);

const PopSlot = ({ n, on = false, s = 24, w = 'w-[30.5px]' }: { n: string; on?: boolean; s?: number; w?: string }) => (
  <div className={`flex h-[30px] shrink-0 items-center justify-center ${w} ${on ? 'border border-[#a8d4e0] bg-[#cde6ec]' : ''}`}>
    <Ic n={n} s={s} />
  </div>
);

const PopSep = ({ m = 'mx-[1px]' }: { m?: string }) => <div className={`h-[26px] w-px shrink-0 bg-[#c8c8c8] ${m}`} />;

const SelectionBar = () => (
  <div className="absolute left-[37px] top-[135px] h-[105px] w-[422px] border border-[#b8b8b8] bg-[#f0f0f0] px-[5px] pt-[7px]">
    <div className="flex items-center gap-[7px]">
      <Select w="w-[167px]" text="无选择过滤器" />
      <Select w="w-[176px]" text="整个装配" />
      <div className="ml-[1px]"><Ic n="link" s={26} /></div>
    </div>
    <div className="mt-[5px] h-px bg-[#d0d0d0]" />
    <div className="mt-[3px] flex h-[30px] items-center">
      <PopSlot n="grayfilter" w="w-[22px]" />
      <PopSlot n="redfilter" s={22} w="w-[38px]" />
      <div className="flex w-[8px] justify-center"><Caret /></div>
      <PopSlot n="undoTarget" w="w-[30px]" />
      <PopSlot n="chainfilter" w="w-[35px]" />
      <PopSep m="" />
      <PopSlot n="cubeTarget" w="w-[34px]" />
      <PopSlot n="rectDash" w="w-[31px]" />
      <div className="flex w-[16px] justify-center"><Caret /></div>
      <PopSep m="mr-[1px]" />
      <PopSlot n="viewcyl" w="w-[34px]" />
      <PopSlot n="viewcube" w="w-[31px]" />
      <PopSep m="ml-[2px] mr-[2px]" />
      <PopSlot n="snapall" on />
      <PopSlot n="lineEnd" on />
      <PopSlot n="lineMid" on />
      <PopSlot n="curvePt" w="w-[30px]" />
    </div>
    <div className="-ml-[2px] flex h-[30px] items-center">
      <PopSlot n="polyPt" on />
      <PopSlot n="splinePt" on />
      <PopSlot n="arcPt" />
      <PopSlot n="circleCtr" on />
      <PopSlot n="circle4" />
      <PopSlot n="crossPt" on />
      <PopSlot n="linePt" on />
      <PopSlot n="surfPt" />
      <PopSlot n="meshPt" />
      <PopSep m="ml-[4px]" />
      <PopSlot n="gridPt" w="w-[34px]" />
    </div>
  </div>
);

type Item = { label: string; key?: string; shortcut?: string; icon?: string; sub?: boolean; on?: boolean; sep?: boolean };

const menu: Item[] = [
  { label: '刷新', key: 'S', shortcut: 'F5', icon: 'refreshWin' },
  { label: '适合窗口', key: 'F', icon: 'fit' },
  { label: '缩放', key: 'Z', shortcut: 'F6', icon: 'zoomW', on: true },
  { label: '平移', key: 'P', icon: 'pan' },
  { label: '旋转', key: 'O', shortcut: 'F7', icon: 'rotate' },
  { label: '更新显示', key: 'Y' },
  { label: '锁定旋转', key: 'N' },
  { label: '', sep: true },
  { label: '真实着色', key: 'I', icon: 'sphere' },
  { label: '渲染样式', key: 'D', sub: true },
  { label: '背景', key: 'B', sub: true },
  { label: '工作视图', key: 'W' },
  { label: '定向视图', key: 'R', sub: true },
  { label: '设置旋转参考', key: 'S', shortcut: 'Ctrl+F2', icon: 'rotref' },
  { label: '', sep: true },
  { label: '重复命令', key: 'R', sub: true },
];

const ContextMenu = () => (
  <div className="absolute left-[37px] top-[247px] w-[225px] border border-[#b0b0b0] bg-[#fafafa] px-[2px] pt-[2px] shadow-[3px_3px_3px_rgba(0,0,0,0.35)]">
    {menu.map((m, i) =>
      m.sep ? (
        <div key={i} className="flex h-[9px] items-start px-[10px] pt-[3px]"><div className="h-px w-full bg-[#dcdcdc]" /></div>
      ) : (
        <div key={i} className={`relative flex h-[24px] items-center text-[14px] leading-none text-[#333] ${m.on ? 'bg-[#aed4e1]' : ''}`}>
          <span className="flex w-[28px] shrink-0 justify-center pr-[4px]">{m.icon && <Ic n={m.icon} s={16} />}</span>
          <span className="whitespace-nowrap">{m.label}(<u>{m.key}</u>)</span>
          {m.shortcut && <span className="ml-auto mr-[20px] whitespace-nowrap">{m.shortcut}</span>}
          {m.sub && <span className="absolute right-[5px] top-[8px] h-0 w-0 border-y-[4.5px] border-l-[5px] border-y-transparent border-l-[#111]" />}
        </div>
      ),
    )}
  </div>
);

const Tooltip = () => (
  <div className="absolute left-[260px] top-[298px] flex h-[56px] w-[288px] flex-col justify-center border border-[#aaa] bg-white pl-[8px] text-[14.8px] leading-[21px] text-[#333] shadow-[3px_3px_3px_rgba(0,0,0,0.35)]">
    <span>通过按住 MB1 并在画出一个矩形后松开</span>
    <span>MB1，放大视图中的特定区域。</span>
  </div>
);

const ImeBar = () => (
  <div className="absolute bottom-[32px] right-0 flex h-[31px] w-[242px] items-center border border-[#c0d4ea] bg-white text-[#1e73c5]">
    <span className="absolute left-[-40px] top-[-7px]"><SogouS s="h-[35px] w-[36px] text-[34px]" /></span>
    <div className="flex w-full items-center pl-[2px]">
      <span className="w-[31px] text-center text-[19px] font-bold leading-none">中</span>
      <span className="w-[30px] text-center text-[18px] font-bold leading-none">°,</span>
      <svg className="ml-[6px]" width="20" height="20" viewBox="0 0 20 20"><circle cx="10" cy="10" r="9.5" fill="#1e73c5" /><circle cx="7" cy="7.5" r="1.5" fill="#fff" /><circle cx="13" cy="7.5" r="1.5" fill="#fff" /><path d="M5 11h10c0 3-2 5-5 5s-5-2-5-5z" fill="#fff" /></svg>
      <svg className="ml-[9px]" width="20" height="22" viewBox="0 0 20 22" fill="none" stroke="#1e73c5" strokeWidth="2"><rect x="7" y="0" width="6" height="13" rx="3" fill="#1e73c5" /><path d="M3 9c0 9 14 9 14 0M10 16v5" /></svg>
      <span className="ml-[9px] w-[20px] text-center font-['Liberation_Sans',sans-serif] text-[22px] font-bold leading-none">Ω</span>
      <svg className="ml-[11px]" width="20" height="18" viewBox="0 0 20 18"><rect width="20" height="18" rx="2" fill="#1e73c5" /><path d="M3 4h14M3 8h14M3 12h14" stroke="#fff" strokeWidth="2" strokeDasharray="2 1" /></svg>
      <svg className="ml-[12px]" width="20" height="22" viewBox="0 0 20 22" fill="#d0d0d0"><circle cx="8" cy="5" r="5" /><path d="M1 12h13v10H1z" /></svg>
      <svg className="ml-[9px]" width="18" height="18" viewBox="0 0 18 18" fill="#1e73c5"><rect width="8" height="8" rx="2" /><rect x="10" width="8" height="8" rx="2" /><rect y="10" width="8" height="8" rx="2" /><rect x="10" y="10" width="8" height="8" rx="2" /></svg>
    </div>
  </div>
);

const Viewport = () => (
  <div className="relative flex h-full min-w-0 flex-1 flex-col border-l border-[#b0b0b0]">
    <div className="flex h-[26px] shrink-0 items-start border-b-2 border-[#57a0bb] bg-[#f0f0f0]">
      <div className="flex h-full w-[189px] items-center gap-[5px] bg-[#57a0bb] pl-[4px] text-[15px] leading-none text-white">
        <Ic n="block" s={15} />
        <span className="whitespace-nowrap">1.4 鼠标右键菜单.prt</span>
        <span className="ml-auto mr-[6px] text-[14px] font-bold">✕</span>
      </div>
    </div>
    <div className="relative flex-1 overflow-hidden bg-[linear-gradient(180deg,#b6b7b9_0%,#d7d8da_55%,#e7e8ea_100%)]">
      <Model />
    </div>
    <SelectionBar />
    <ContextMenu />
    <Tooltip />
    <ImeBar />
  </div>
);

export default function App() {
  return (
    <div className="relative flex h-[1080px] w-[1920px] overflow-hidden bg-[#f0f0f0] font-['Noto_Sans','Noto_Sans_CJK_SC',sans-serif]">
      <Taskbar />
      <div className="flex h-full min-w-0 flex-1 flex-col">
        <TitleBar />
        <TabBar />
        <Ribbon />
        <ToolStrip />
        <main className="flex min-h-0 flex-1">
          <StripTabs />
          <Navigator />
          <Viewport />
        </main>
        <footer className="flex h-[24px] shrink-0 items-center justify-center border-t-2 border-[#b0b0b0] bg-[#f0f0f0] pl-[108px] text-[14px] leading-none text-[#222]">
          该操作重置恢复数据
        </footer>
      </div>
      <span className="absolute left-[1638px] top-[1050px] font-['Liberation_Sans',sans-serif] text-[16px] leading-none text-[#ffffff99] [text-shadow:0_0_1px_#8888]">https://blog.csdn.net/weixin_43942093</span>
    </div>
  );
}
